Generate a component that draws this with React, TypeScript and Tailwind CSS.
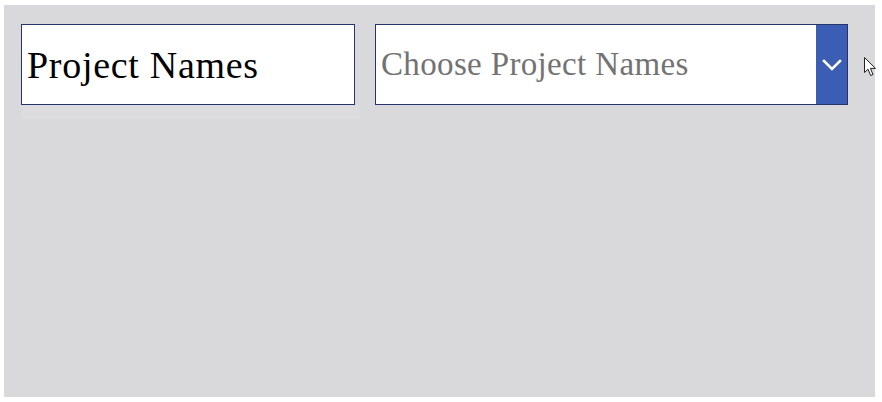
import React from "react";

export default function App() {
  return (
    <div className="w-[882px] h-[402px] bg-white pt-[5px] pl-[4px]">
      <div className="relative w-[871px] h-[392px] bg-[#d9d9db] pl-[17px] pt-[19px] flex gap-[15px] items-start">
        <div className="flex flex-col">
          <div className="w-[334px] h-[81px] bg-white border border-[#26336f] flex items-center pl-[5px]">
            <span
              className="text-[38px] leading-none text-black tracking-[0.7px]"
              style={{ fontFamily: '"Liberation Serif", serif' }}
            >
              Project Names
            </span>
          </div>
          <div className="w-[339px] h-[14px] bg-[#dcdcde]" />
        </div>
        <div className="w-[473px] h-[81px] bg-white border border-[#26336f] flex items-stretch">
          <div className="flex-1 flex items-center pl-[5px]">
            <span
              className="text-[33px] leading-none text-[#737373] tracking-[0.35px]"
              style={{ fontFamily: '"Liberation Serif", serif' }}
            >
              Choose Project Names
            </span>
          </div>
          <div className="w-[31px] bg-[#3b5db3] flex items-center justify-center">
            <svg width="20" height="14" viewBox="0 0 20 14" fill="none">
              <path d="M2 3 L10 11 L18 3" stroke="white" strokeWidth="2.6" strokeLinecap="square" />
            </svg>
          </div>
        </div>
        <svg
          className="absolute left-[860px] top-[52px]"
          width="13"
          height="20"
          viewBox="0 0 13 20"
        >
          <path
            d="M0.5 0.5 L0.5 15.5 L4 12.2 L6.6 18.5 L9 17.5 L6.4 11.4 L11.5 11.4 Z"
            fill="white"
            stroke="#222"
            strokeWidth="1"
            strokeLinejoin="miter"
          />
        </svg>
      </div>
    </div>
  );
}
